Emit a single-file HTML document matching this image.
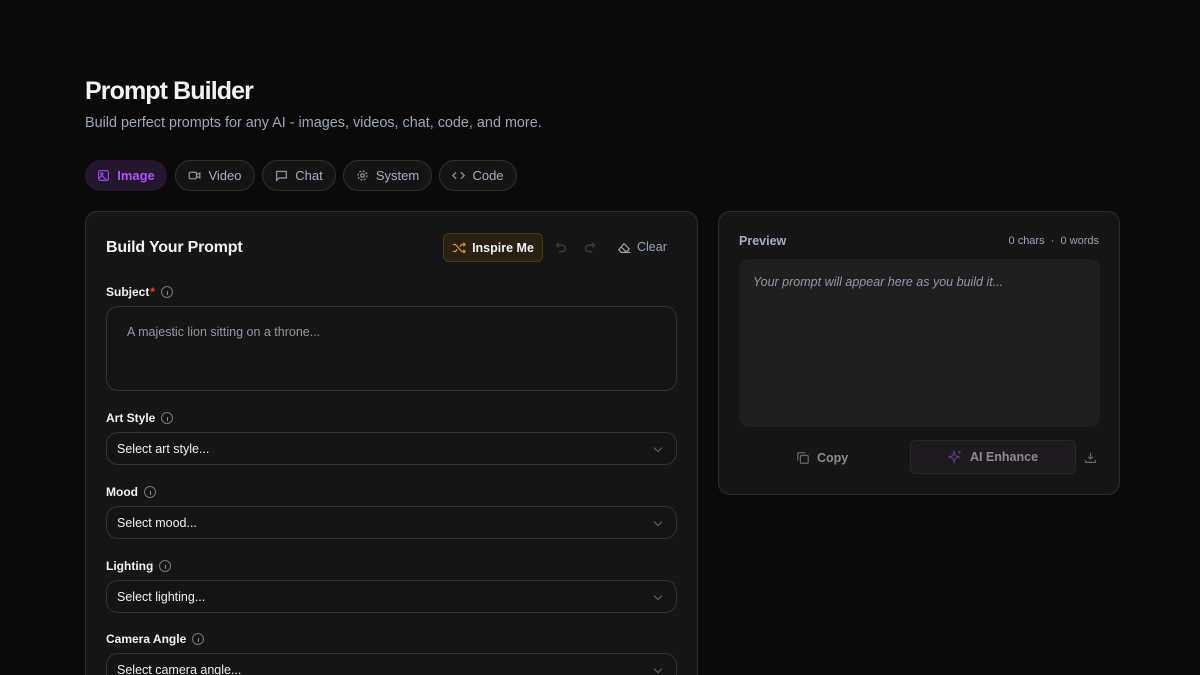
<!DOCTYPE html>
<html><head><meta charset="utf-8"><style>
*{box-sizing:border-box;margin:0;padding:0}
html{width:1200px;height:675px;overflow:hidden;background:#0a0a0a}
body{width:1200px;height:675px;overflow:hidden;background:#0a0a0a;font-family:"Liberation Sans",sans-serif;color:#f2f2f2;position:relative}
.abs{position:absolute}
h1{position:absolute;left:85px;top:77px;font-size:25px;font-weight:700;letter-spacing:-0.9px}
.sub{left:85px;top:115px;font-size:14.4px;color:#9aa6ba}
.tab{position:absolute;top:160px;height:31px;border:1px solid #2e2e2e;border-radius:16px;background:#141414;color:#a6afbf;font-size:13px;display:flex;align-items:center;justify-content:center;gap:7px}
.tab svg{width:13px;height:13px;stroke:currentColor;fill:none;stroke-width:1.6;opacity:.8}
.card{position:absolute;background:#161616;border:1px solid #2c2c2c;border-radius:12px}
.lbl{position:absolute;left:106px;font-size:12px;font-weight:700;color:#f2f2f2;display:flex;align-items:center;gap:6px}
.info{width:12px;height:12px;border:1px solid #777;border-radius:50%;display:inline-block;position:relative}
.info:after{content:"";position:absolute;left:4.5px;top:4px;width:1px;height:4px;background:#888}
.sel{position:absolute;left:106px;width:571px;height:33px;border:1px solid #333;border-radius:12px;background:#151515;font-size:12.5px;color:#eee;padding:0 0 0 10px;display:flex;align-items:center}
.sel:after{content:"";position:absolute;right:15px;top:12px;width:5px;height:5px;border-right:1px solid #666;border-bottom:1px solid #666;transform:rotate(45deg)}
</style></head><body>
<h1>Prompt Builder</h1>
<div class="abs sub">Build perfect prompts for any AI - images, videos, chat, code, and more.</div>

<div class="tab" style="left:85px;width:82px;background:#24162f;border-color:#24162f;color:#a855f7;font-weight:700"><svg viewBox="0 0 16 16"><rect x="2" y="2" width="12" height="12" rx="2"/><circle cx="6" cy="6" r="1.3"/><path d="M2 12l4-4 6 6"/></svg>Image</div>
<div class="tab" style="left:175px;width:80px"><svg viewBox="0 0 16 16"><rect x="1.5" y="4" width="9" height="8" rx="1.5"/><path d="M10.5 7l4-2v6l-4-2"/></svg>Video</div>
<div class="tab" style="left:262px;width:74px"><svg viewBox="0 0 16 16"><path d="M2 3h12v8H5l-3 3z"/></svg>Chat</div>
<div class="tab" style="left:343px;width:89px"><svg viewBox="0 0 16 16"><circle cx="8" cy="8" r="2.2"/><circle cx="8" cy="8" r="5.5" stroke-dasharray="2.5 1.8"/></svg>System</div>
<div class="tab" style="left:439px;width:78px"><svg viewBox="0 0 16 16"><path d="M5 4L1 8l4 4M11 4l4 4-4 4"/></svg>Code</div>

<div class="card" style="left:85px;top:211px;width:613px;height:480px"></div>
<div class="abs" style="left:106px;top:239px;font-size:16px;font-weight:700;letter-spacing:-0.2px">Build Your Prompt</div>
<div class="abs" style="left:443px;top:233px;width:100px;height:29px;background:#2a2011;border:1px solid #4a3818;border-radius:6px;display:flex;align-items:center;justify-content:center;gap:6px;font-size:12.5px;font-weight:700;color:#f2f2f2"><svg width="14" height="14" viewBox="0 0 16 16" fill="none" stroke="#c9962e" stroke-width="1.5"><path d="M1 4h3l7 8h4M1 12h3l2-2.5M9 6.5L11 4h4M13 2l2 2-2 2M13 10l2 2-2 2"/></svg>Inspire Me</div>
<svg class="abs" style="left:554px;top:241px" width="13" height="13" viewBox="0 0 16 16" fill="none" stroke="#3c3c3c" stroke-width="1.6"><path d="M3 5h7a4 4 0 010 8H6M6 2L3 5l3 3"/></svg>
<svg class="abs" style="left:584px;top:241px" width="13" height="13" viewBox="0 0 16 16" fill="none" stroke="#3c3c3c" stroke-width="1.6"><path d="M13 5H6a4 4 0 000 8h4M10 2l3 3-3 3"/></svg>
<svg class="abs" style="left:617px;top:241px" width="14" height="14" viewBox="0 0 16 16" fill="none" stroke="#9aa3b0" stroke-width="1.4"><path d="M2 10l6-7 6 6-4 4H5zM5 13h10M5 7l5 5"/></svg>
<div class="abs" style="left:637px;top:240px;font-size:12.5px;color:#9aa6ba">Clear</div>

<div class="lbl" style="top:285px">Subject<span style="color:#ef4444;margin-left:-5px">*</span><span class="info"></span></div>
<div class="abs" style="left:106px;top:306px;width:571px;height:85px;border:1px solid #333;border-radius:12px;background:#151515"></div>
<div class="abs" style="left:127px;top:325px;font-size:12.5px;color:#8f99a8">A majestic lion sitting on a throne...</div>

<div class="lbl" style="top:411px">Art Style<span class="info"></span></div>
<div class="sel" style="top:432px">Select art style...</div>
<div class="lbl" style="top:485px">Mood<span class="info"></span></div>
<div class="sel" style="top:506px">Select mood...</div>
<div class="lbl" style="top:559px">Lighting<span class="info"></span></div>
<div class="sel" style="top:580px">Select lighting...</div>
<div class="lbl" style="top:632px">Camera Angle<span class="info"></span></div>
<div class="sel" style="top:653px">Select camera angle...</div>

<div class="card" style="left:718px;top:211px;width:402px;height:284px"></div>
<div class="abs" style="left:739px;top:234px;font-size:12.5px;font-weight:700;color:#a4aebf">Preview</div>
<div class="abs" style="right:101px;top:235px;font-size:11px;color:#98a2b2;white-space:nowrap">0 chars &nbsp;·&nbsp; 0 words</div>
<div class="abs" style="left:739px;top:259px;width:361px;height:168px;background:#1f1f1f;border-radius:10px"></div>
<div class="abs" style="left:753px;top:275px;font-size:12.5px;font-style:italic;color:#8f9aab">Your prompt will appear here as you build it...</div>
<svg class="abs" style="left:796px;top:451px" width="14" height="14" viewBox="0 0 16 16" fill="none" stroke="#666" stroke-width="1.4"><rect x="5" y="5" width="9" height="9" rx="1.5"/><path d="M2 11V3a1 1 0 011-1h8"/></svg>
<div class="abs" style="left:817px;top:451px;font-size:12.5px;font-weight:700;color:#8a8a8a">Copy</div>
<div class="abs" style="left:910px;top:440px;width:166px;height:34px;background:#1f1920;border:1px solid #2e2430;border-radius:6px;display:flex;align-items:center;justify-content:center;gap:8px;font-size:12.5px;font-weight:700;color:#8c8c8c"><svg width="14" height="14" viewBox="0 0 16 16" fill="none" stroke="#5a3c78" stroke-width="1.4"><path d="M7 2l1.5 4.5L13 8l-4.5 1.5L7 14l-1.5-4.5L1 8l4.5-1.5zM13 1v3M11.5 2.5h3"/></svg>AI Enhance</div>
<svg class="abs" style="left:1084px;top:451px" width="13" height="13" viewBox="0 0 16 16" fill="none" stroke="#666" stroke-width="1.4"><path d="M8 2v8M5 7l3 3 3-3M2 11v3h12v-3"/></svg>
</body></html>
